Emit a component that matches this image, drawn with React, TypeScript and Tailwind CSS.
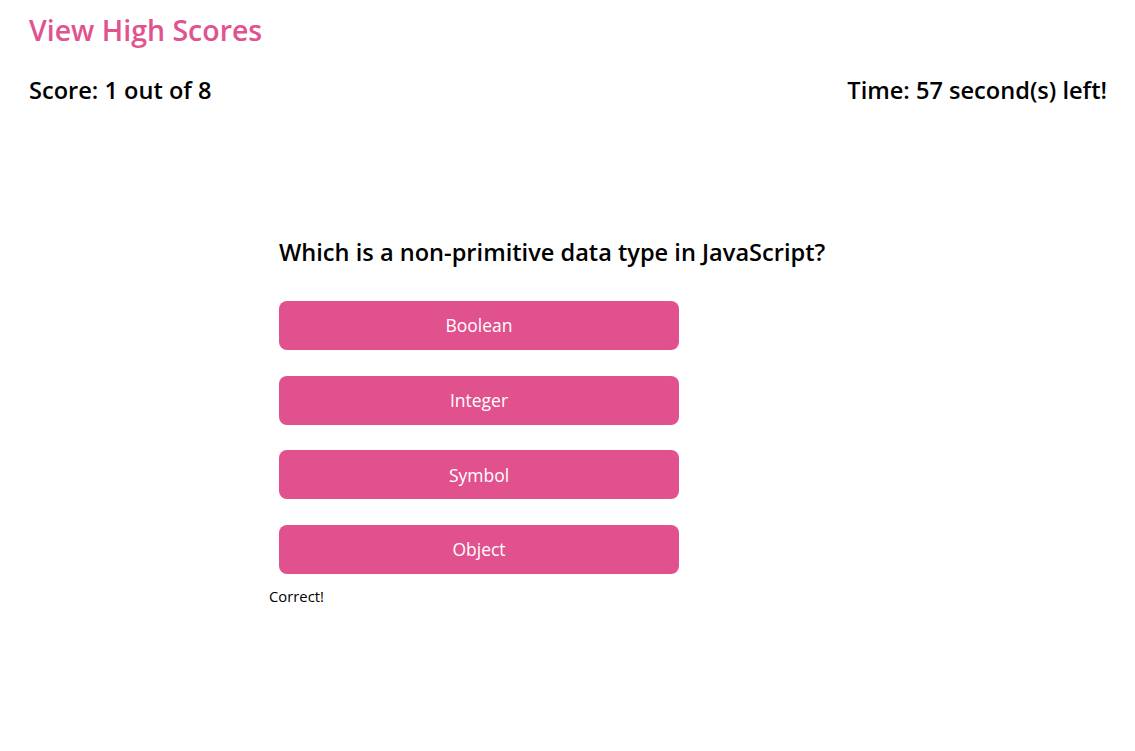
import { useState } from "react";

const choices = ["Boolean", "Integer", "Symbol", "Object"];

export default function App() {
  const [feedback, setFeedback] = useState("Correct!");

  return (
    <div className="min-h-screen bg-white text-black font-['Open_Sans',sans-serif]">
      <header className="px-[28px]">
        <div className="h-[60px] flex items-center pl-[1px]">
          <a href="#" className="text-[28.5px] font-semibold text-[#e0538e] leading-none">
            View High Scores
          </a>
        </div>
        <div className="h-[61px] flex items-center justify-between pl-[1px] pt-[1px]">
          <h2 className="text-[23.6px] font-semibold leading-none">Score: 1 out of 8</h2>
          <h2 className="text-[23.6px] font-semibold leading-none">Time: 57 second(s) left!</h2>
        </div>
      </header>

      <main className="pl-[269px] pt-[117px]">
        <div className="pl-[10px]">
          <h3 className="text-[23.6px] font-semibold leading-none h-[30px] flex items-center">
            Which is a non-primitive data type in JavaScript?
          </h3>
          <div className="flex flex-col gap-[25.7px] mt-[33px]">
            {choices.map((c) => (
              <button
                key={c}
                onClick={() => setFeedback(c === "Object" ? "Correct!" : "Wrong!")}
                className="w-[400px] h-[49px] rounded-[8px] bg-[#e0518d] text-white text-[17.5px]"
              >
                {c}
              </button>
            ))}
          </div>
        </div>
        <p className="text-[14.8px] mt-[15px] leading-none">{feedback}</p>
      </main>
    </div>
  );
}
